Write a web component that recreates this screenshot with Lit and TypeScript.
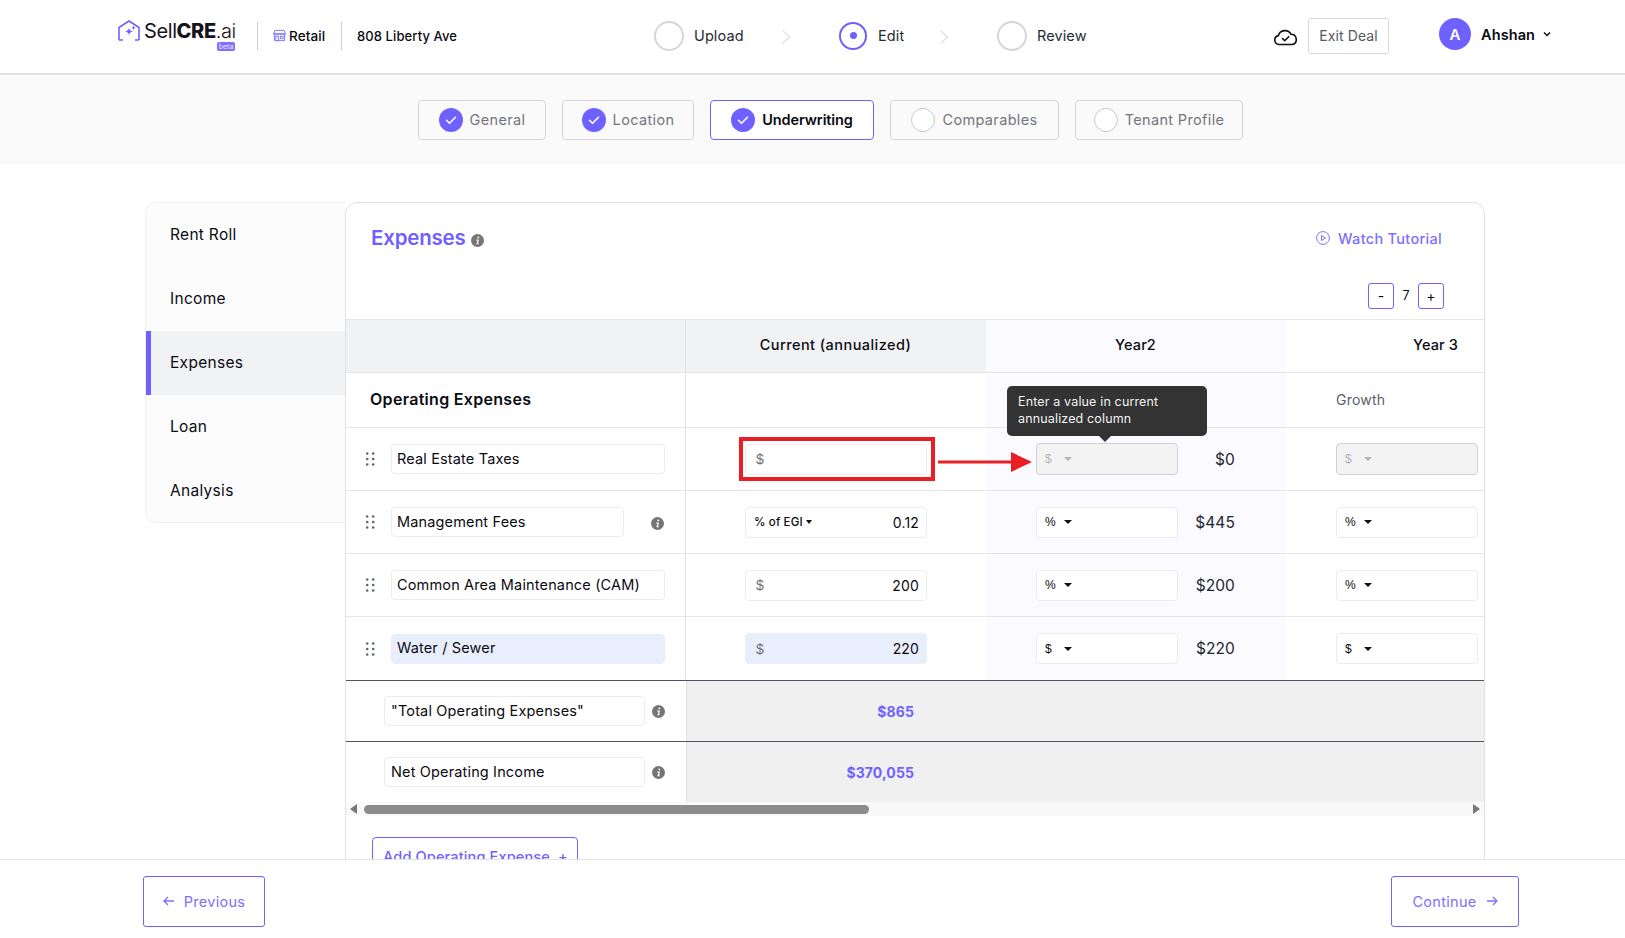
import { LitElement, html, css, svg } from "lit";
import { customElement } from "lit/decorators.js";

const info = html`<svg class="info" viewBox="0 0 14 14"><circle cx="7" cy="7" r="7" fill="#757575"/><path d="M7.9 2.6a1.05 1.05 0 1 1-.01 2.1 1.05 1.05 0 0 1 .01-2.1zM5.6 6h2.9l-.8 4.1h.8l-.1.9H5.5l.1-.9h.7L6.9 6.9h-1.4z" fill="#fff"/></svg>`;
const drag = html`<svg class="drag" viewBox="0 0 9 14"><g fill="#5b6472">${[1.2, 7.2].map((x) => [1.5, 7, 12.5].map((y) => svg`<circle cx="${x}" cy="${y}" r="1.3"/>`))}</g></svg>`;
const check = html`<svg class="chk" viewBox="0 0 24 24"><circle cx="12" cy="12" r="12" fill="#6f61ff"/><path d="M7.5 12.3l3 3 6-6" fill="none" stroke="#fff" stroke-width="1.6" stroke-linecap="round" stroke-linejoin="round"/></svg>`;
const chev = html`<svg class="stepchev" viewBox="0 0 10 16"><path d="M1.5 1.5L8.5 8l-7 6.5" fill="none" stroke="#e3e3e6" stroke-width="1.7"/></svg>`;

const rows = [
  { name: "Real Estate Taxes", cur: "", unit: "$", amt: "$0", disabled: true },
  { name: "Management Fees", cur: "0.12", unit: "%", amt: "$445", egi: true },
  { name: "Common Area Maintenance (CAM)", cur: "200", unit: "%", amt: "$200" },
  { name: "Water / Sewer", cur: "220", unit: "$", amt: "$220", filled: true },
];

@customElement("app-root")
export class AppRoot extends LitElement {
  static styles = css`
    :host { display: block; height: 938px; overflow: hidden; position: relative; background: #fff; font-family: Inter, "Liberation Sans", sans-serif; color: #0b0b12; letter-spacing: 0.1px; }
    * { box-sizing: border-box; }
    header { height: 75px; border-bottom: 2px solid #e1e1e3; display: flex; align-items: center; padding-left: 118px; padding-bottom: 2px; background: #fff; }
    .logo { width: 118px; height: 32px; display: flex; position: relative; margin-top: -2px; }
    .logo svg { width: 22px; height: 21px; flex: none; margin-top: 1px; }
    .wordmark { font-size: 20px; margin-left: 4px; letter-spacing: -0.4px; line-height: 24px; color: #14141c; white-space: nowrap; }
    .wordmark b { font-weight: 800; }
    .wordmark i { font-style: normal; font-weight: 300; }
    .beta { position: absolute; left: 99px; top: 23px; width: 18px; height: 9px; border-radius: 2px; background: #7f70ff; color: #e8e5ff; font-size: 7px; line-height: 9px; text-align: center; letter-spacing: 0; }
    .vr { width: 1px; height: 28px; background: #cfcfd2; flex: none; }
    .retail { display: flex; align-items: center; gap: 3px; font-size: 13.5px; font-weight: 500; width: 83px; padding-left: 15px; }
    .retail svg { width: 13px; height: 13px; }
    .addr { font-size: 13px; font-weight: 500; margin-left: 15px; width: 297px; white-space: nowrap; }
    .step { display: flex; align-items: center; font-size: 14.5px; color: #262b36; }
    .ring { width: 30px; height: 30px; border-radius: 50%; border: 2px solid #d5d5da; margin-right: 10px; flex: none; }
    .ring.on { width: 28px; height: 28px; border-color: #6f61ff; display: flex; align-items: center; justify-content: center; margin-right: 11px; }
    .ring.on::after { content: ""; width: 7px; height: 7px; border-radius: 50%; background: #6f61ff; }
    .stepchev { width: 10px; height: 16px; flex: none; margin-top: 2px; margin-left: -6px; margin-right: 6px; }
    .cloud { width: 25px; height: 20px; margin-left: 175px; flex: none; margin-top: 2px; }
    .exit { margin-left: 10px; width: 81px; height: 36px; border: 1px solid #d8d8dc; border-radius: 3px; font-size: 14px; color: #555b66; display: flex; align-items: center; justify-content: center; }
    .avatar { width: 32px; height: 32px; margin-left: 50px; border-radius: 50%; background: #6f61ff; color: #fff; font-weight: 600; font-size: 15px; display: flex; align-items: center; justify-content: center; margin-top: -3px; }
    .user { margin-left: 10px; font-weight: 600; font-size: 14.5px; margin-top: -3px; }
    .uchev { width: 8px; height: 6px; margin-left: 8px; margin-top: -3px; }
    .tabs { height: 89px; background: #fafafa; display: flex; justify-content: center; align-items: flex-start; padding-top: 25px; gap: 16px; padding-left: 36px; }
    .tab { height: 40px; border: 1px solid #d6d6d8; border-radius: 4px; display: flex; align-items: center; justify-content: center; gap: 7px; font-size: 14.5px; color: #75757d; letter-spacing: 0.35px; padding-bottom: 1px; }
    .tab.cur { border-color: #6f61ff; background: #fff; color: #0b0b12; font-weight: 600; letter-spacing: -0.1px; }
    .chk { width: 24px; height: 24px; flex: none; margin-top: 1px; }
    .empty { width: 24px; height: 24px; border-radius: 50%; border: 1px solid #c9c9cd; background: #fff; flex: none; margin-top: 1px; }
    .content { display: flex; padding: 38px 0 0 145px; align-items: flex-start; }
    nav { width: 200px; height: 321px; background: #fcfcfc; border: 1px solid #f0f0f1; border-right: none; border-radius: 12px 0 0 12px; overflow: hidden; flex: none; }
    nav div { height: 64px; display: flex; align-items: center; padding-left: 24px; font-size: 15.5px; letter-spacing: 0.3px; padding-bottom: 2px; }
    nav div.act { background: #f1f2f3; border-left: 5px solid #6f61ff; padding-left: 19px; }
    .card { width: 1140px; height: 760px; border: 1px solid #e1e1e4; border-radius: 12px 12px 0 0; flex: none; background: #fff; }
    .top { height: 80px; padding: 20px 42px 0 25px; display: flex; align-items: flex-start; }
    h2 { margin: 0; font-size: 20.5px; font-weight: 600; color: #6f61ff; letter-spacing: -0.2px; line-height: 30px; }
    .top .info { margin: 11px 0 0 5px; }
    .info { width: 13px; height: 13px; flex: none; }
    .watch { margin-left: auto; display: flex; align-items: center; gap: 8px; font-size: 14.5px; font-weight: 500; color: #7d70ff; height: 30px; letter-spacing: 0.3px; }
    .watch svg { width: 14px; height: 14px; }
    .stepper { height: 36px; display: flex; justify-content: flex-end; padding-right: 40px; gap: 8px; align-items: flex-start; font-size: 13px; }
    .stepper span { line-height: 26px; width: 8px; text-align: center; font-size: 12.5px; }
    .stepper button { all: unset; box-sizing: border-box; width: 26px; height: 26px; border: 1px solid #6f61ff; border-radius: 3px; text-align: center; line-height: 24px; font-size: 14px; font-family: inherit; }
    .table { overflow: hidden; width: 1138px; }
    .row { display: grid; grid-template-columns: 340px 300px 300px 300px; width: 1240px; border-top: 1px solid #e6e6e9; }
    .row > div { border-right: 1px solid transparent; display: flex; align-items: center; position: relative; }
    .h { height: 53px; font-size: 14.5px; font-weight: 500; }
    .h > div { justify-content: center; padding-bottom: 3px; }
    .h .wide { letter-spacing: 0.45px; }
    .h .g { background: #f1f2f4; }
    .h .g:first-child { border-right-color: #e3e3e6; }
    .y2 { background: #fafaff; }
    .sec { height: 55px; }
    .sec .lab { font-weight: 600; font-size: 16px; padding-left: 24px; letter-spacing: 0.3px; border-right-color: #e3e3e6 !important; padding-bottom: 2px; }
    .growth { padding-left: 50px; font-size: 14px; color: #5d6068; letter-spacing: 0.2px; padding-bottom: 2px; }
    .r { height: 63px; }
    .r.last { height: 64px; }
    .c1 { padding-left: 20px; gap: 16px; border-right-color: #e3e3e6 !important; padding-right: 20px; }
    .drag { width: 9px; height: 14px; flex: none; }
    .field { height: 30px; border: 1px solid #ececef; border-radius: 4px; background: #fff; display: flex; align-items: center; padding: 0 6px 2px 5px; font-size: 14.5px; white-space: nowrap; flex: none; letter-spacing: 0.15px; }
    .w274 { width: 274px; }
    .w233 { width: 233px; }
    .fill { background: #e8eefb; border-color: #e8eefb; }
    .cc { padding-left: 59px; z-index: 1; }
    .money { width: 182px; height: 31px; padding: 0 7px 0 10px; justify-content: space-between; font-size: 14px; }
    .money em { font-style: normal; color: #6e6e75; font-family: "Liberation Sans", sans-serif; }
    .egi { font-size: 11.5px; font-weight: 500; display: flex; align-items: center; gap: 3px; margin-left: -2px; }
    .sel { width: 142px; height: 31px; padding: 0 0 0 8px; font-size: 12px; margin-left: 50px; flex: none; font-family: "Liberation Sans", sans-serif; }
    .sel b { font-weight: 400; width: 19px; }
    .sel.dis { background: #f3f3f4; border-color: #cfd0d8; height: 32px; color: #b4b5bd; }
    .caret { width: 0; height: 0; border-left: 4.5px solid transparent; border-right: 4.5px solid transparent; border-top: 4.5px solid #111; display: inline-block; }
    .egi .caret { border-width: 4px 3.5px 0; }
    .dis .caret { border-top-color: #b4b5bd; }
    .amt { width: 57px; text-align: right; font-size: 15.5px; color: #23262e; flex: none; }
    .redbox { position: absolute; left: 53px; top: 9px; width: 196px; height: 44px; border: 4px solid #e81f25; }
    .arrow { position: absolute; left: 252px; top: 24px; width: 94px; height: 20px; }
    .tip { position: absolute; left: 21px; top: -42px; width: 200px; height: 50px; border-radius: 5px; background: #333; color: #f2f2f2; font-size: 12.5px; letter-spacing: 0.15px; line-height: 17px; padding: 7px 11px; z-index: 2; white-space: nowrap; }
    .tip::after { content: ""; position: absolute; left: 92px; bottom: -6px; border-left: 6px solid transparent; border-right: 6px solid transparent; border-top: 6px solid #333; }
    .tot { display: grid; grid-template-columns: 340px 798px; border-top: 1px solid #4b5563; height: 61px; }
    .tot > div { display: flex; align-items: center; }
    .tot .a { padding-left: 38px; gap: 7px; }
    .tot .field { width: 261px; padding: 0 6px 2px; }
    .tot .b { background: #f0f0f0; padding-right: 570px; justify-content: flex-end; font-weight: 700; font-size: 14px; letter-spacing: 0.1px; color: #6f61ff; border-left: 1px solid #e3e3e6; }
    .bar { height: 14px; background: #f9f9f9; display: flex; align-items: center; padding: 0 4px; justify-content: space-between; }
    .bar .thumb { width: 505px; height: 9px; background: #8c8c8c; border-radius: 5px; margin-left: 7px; margin-right: auto; }
    .bl { border-top: 5px solid transparent; border-bottom: 5px solid transparent; border-right: 7px solid #777; }
    .br { border-top: 5px solid transparent; border-bottom: 5px solid transparent; border-left: 7px solid #777; }
    .add { margin: 21px 0 0 26px; width: 206px; height: 42px; border: 1px solid #6f61ff; border-radius: 4px; color: #6f61ff; font-size: 14.5px; font-weight: 500; padding: 10px 0 0 10px; white-space: nowrap; letter-spacing: 0.15px; }
    footer { position: absolute; left: 0; right: 0; top: 859px; height: 79px; background: #fff; border-top: 1px solid #e4e4e6; display: flex; justify-content: space-between; padding: 16px 106px 0 143px; }
    .btn { height: 51px; border: 1px solid #6f61ff; border-radius: 3px; display: flex; align-items: center; justify-content: center; gap: 9px; color: #7d70ff; font-size: 14.5px; letter-spacing: 0.3px; padding-bottom: 1px; }
    .btn svg { width: 12px; height: 10px; }
  `;

  render() {
    return html`
      <header>
        <div class="logo">
          <svg viewBox="0 0 22 21"><path d="M1 20V7.5L11 1l10 6.5V20" fill="none" stroke="#6f61ff" stroke-width="1.6"/><path d="M1 20h4M17 20h4" stroke="#6f61ff" stroke-width="1.4"/><path d="M11 7.5c.4 2.6 1.4 3.6 4 4-2.6.4-3.6 1.4-4 4-.4-2.6-1.4-3.6-4-4 2.6-.4 3.6-1.4 4-4zM15.5 5.5l.6 1.7 1.7.6-1.7.6-.6 1.7-.6-1.7-1.7-.6 1.7-.6z" fill="#6f61ff"/></svg>
          <div class="wordmark">Sell<b>CRE</b><i>.ai</i></div>
          <div class="beta">beta</div>
        </div>
        <div class="vr" style="margin-left:21px"></div>
        <div class="retail"><svg viewBox="0 0 14 14" fill="none" stroke="#7d70ff" stroke-width="1"><path d="M2 1.500h10l1.300 3.500H.7zM1.500 5v7.500h11V5M.7 5c0 2 3 2 3.100 0 .1 2 3.100 2 3.200 0 .1 2 3.100 2 3.200 0 .1 2 3.100 2 3.100 0M3 8h3v4.500H3zM8 8h3v2.500H8z"/></svg>Retail</div>
        <div class="vr"></div>
        <div class="addr">808 Liberty Ave</div>
        <div class="step"><div class="ring"></div><span style="width:93px">Upload</span></div>${chev}
        <div class="step" style="margin-left:42px"><div class="ring on"></div><span style="width:67px">Edit</span></div>${chev}
        <div class="step" style="margin-left:42px"><div class="ring"></div><span style="width:61px">Review</span></div>
        <svg class="cloud" viewBox="0 0 25 20" fill="none" stroke="#111" stroke-width="1.600" stroke-linecap="round" stroke-linejoin="round"><path d="M6 17.500a4.500 4.500 0 0 1-.6-8.900A6.800 6.800 0 0 1 18 7.300a5.200 5.200 0 0 1 1.500 10.200z"/><path d="M9.500 11.500l2.200 2.200 4-4"/></svg>
        <div class="exit">Exit Deal</div>
        <div class="avatar">A</div>
        <div class="user">Ahshan</div>
        <svg class="uchev" viewBox="0 0 8 6"><path d="M1 1.500L4 4.500 7 1.500" fill="none" stroke="#111" stroke-width="1.500"/></svg>
      </header>
      <div class="tabs">
        <div class="tab" style="width:128px">${check}General</div>
        <div class="tab" style="width:132px">${check}Location</div>
        <div class="tab cur" style="width:164px">${check}Underwriting</div>
        <div class="tab" style="width:169px"><span class="empty"></span>Comparables</div>
        <div class="tab" style="width:168px"><span class="empty"></span>Tenant Profile</div>
      </div>
      <div class="content">
        <nav>
          <div>Rent Roll</div><div>Income</div><div class="act">Expenses</div><div>Loan</div><div>Analysis</div>
        </nav>
        <div class="card">
          <div class="top">
            <h2>Expenses</h2>${info}
            <div class="watch"><svg viewBox="0 0 14 14" fill="none" stroke="#7d70ff" stroke-width="1"><circle cx="7" cy="7" r="6.400"/><path d="M5.500 4.500l4 2.500-4 2.500z"/></svg>Watch Tutorial</div>
          </div>
          <div class="stepper"><button>-</button><span>7</span><button>+</button></div>
          <div class="table">
            <div class="row h">
              <div class="g"></div><div class="g wide">Current (annualized)</div><div class="y2">Year2</div><div>Year 3</div>
            </div>
            <div class="row sec">
              <div class="lab">Operating Expenses</div><div></div><div class="y2"></div><div class="growth">Growth</div>
            </div>
            ${rows.map((r, i) => html`
              <div class="row r ${i === 3 ? "last" : ""}">
                <div class="c1">
                  ${drag}
                  <div class="field ${i === 1 ? "w233" : "w274"} ${r.filled ? "fill" : ""}">${r.name}</div>
                  ${i === 1 ? html`<span style="margin-left:-6px;margin-top:2px;padding-left:17px;display:flex">${info}</span>` : ""}
                </div>
                <div class="cc">
                  <div class="field money ${r.filled ? "fill" : ""}">
                    ${r.egi ? html`<span class="egi">% of EGI <i class="caret"></i></span>` : html`<em>$</em>`}
                    <span>${r.cur}</span>
                  </div>
                  ${r.disabled ? html`
                    <div class="redbox"></div>
                    <svg class="arrow" viewBox="0 0 94 20"><path d="M0 8.500h73V0l21 10-21 10v-8.500H0z" fill="#e81f25"/></svg>` : ""}
                </div>
                <div class="y2">
                  <div class="field sel ${r.disabled ? "dis" : ""}"><b>${r.unit}</b><i class="caret"></i></div>
                  <span class="amt">${r.amt}</span>
                  ${r.disabled ? html`<div class="tip">Enter a value in current<br />annualized column</div>` : ""}
                </div>
                <div>
                  <div class="field sel ${r.disabled ? "dis" : ""}"><b>${r.unit}</b><i class="caret"></i></div>
                </div>
              </div>`)}
            <div class="tot">
              <div class="a"><div class="field">"Total Operating Expenses"</div>${info}</div>
              <div class="b">$865</div>
            </div>
            <div class="tot">
              <div class="a"><div class="field">Net Operating Income</div>${info}</div>
              <div class="b">$370,055</div>
            </div>
            <div class="bar"><i class="bl"></i><div class="thumb"></div><i class="br"></i></div>
          </div>
          <div class="add">Add Operating Expense &nbsp;+</div>
        </div>
      </div>
      <footer>
        <div class="btn" style="width:122px"><svg viewBox="0 0 12 10" fill="none" stroke="#7d70ff" stroke-width="1.300"><path d="M11 5H1.500M5 1L1 5l4 4"/></svg>Previous</div>
        <div class="btn" style="width:128px">Continue<svg viewBox="0 0 12 10" fill="none" stroke="#7d70ff" stroke-width="1.300"><path d="M1 5h9.500M7 1l4 4-4 4"/></svg></div>
      </footer>
    `;
  }
}
